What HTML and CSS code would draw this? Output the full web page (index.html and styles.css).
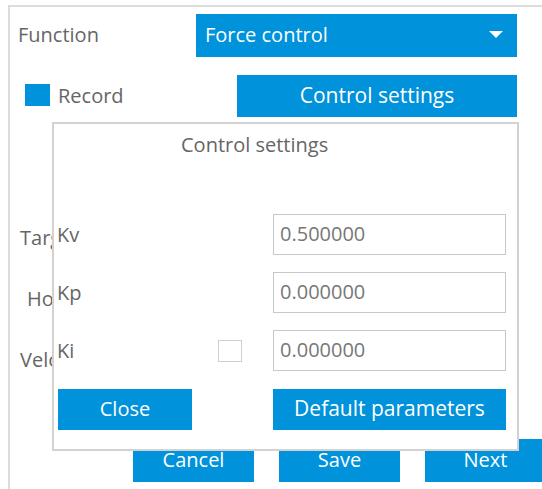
FILE: index.html
```html
<!DOCTYPE html>
<html lang="en">
<head>
<meta charset="utf-8">
<title>Function settings</title>
<link rel="stylesheet" href="styles.css">
</head>
<body>
<div class="panel">
  <div class="row row-function">
    <span class="label">Function</span>
    <div class="select">
      <span class="select-value">Force control</span>
      <svg class="caret" width="14" height="7" viewBox="0 0 14 7"><path d="M0 0H14L7 7Z" fill="#fff"/></svg>
    </div>
  </div>

  <div class="row row-record">
    <label class="check">
      <span class="box box-on"></span>
      <span class="check-text">Record</span>
    </label>
    <button class="btn btn-wide btn-settings">Control settings</button>
  </div>

  <div class="fields">
    <div class="field"><span class="field-label">Target force</span></div>
    <div class="field"><span class="field-label field-label-inset">Hold time</span></div>
    <div class="field"><span class="field-label">Velocity</span></div>
  </div>

  <div class="actions">
    <button class="btn btn-action">Cancel</button>
    <button class="btn btn-action">Save</button>
    <button class="btn btn-action">Next</button>
  </div>

  <div class="dialog">
    <div class="dialog-title">Control settings</div>
    <div class="dialog-grid">
      <span class="param-label">Kv</span>
      <span></span>
      <div class="input">0.500000</div>

      <span class="param-label">Kp</span>
      <span></span>
      <div class="input">0.000000</div>

      <span class="param-label">Ki</span>
      <span class="box box-off"></span>
      <div class="input">0.000000</div>

      <button class="btn btn-close">Close</button>
      <span></span>
      <button class="btn btn-wide btn-default">Default parameters</button>
    </div>
  </div>
</div>
</body>
</html>
```

FILE: styles.css
```css
* {
  box-sizing: border-box;
}

html, body {
  margin: 0;
  background: #fff;
  overflow: hidden;
}

body {
  font-family: "Open Sans", "Noto Sans", sans-serif;
  font-size: 20px;
  color: #666;
  height: 489px;
}

.panel {
  position: relative;
  margin: 5px 0 0 8px;
  height: 490px;
  border-top: 2px solid #dcdcdc;
  border-left: 2px solid #dcdcdc;
}

/* top rows */
.row {
  display: flex;
  align-items: center;
}

.row-function {
  margin-top: 7px;
  height: 43px;
}

.row-function .label {
  width: 186px;
  padding-left: 8px;
  margin-top: -3px;
}

.select {
  width: 321px;
  height: 43px;
  background: #0092da;
  color: #fff;
  display: flex;
  align-items: center;
  justify-content: space-between;
  padding: 0 14px 0 9px;
}

.select-value {
  margin-top: -3px;
}

.caret {
  display: block;
  margin-top: -2px;
}

.row-record {
  margin-top: 18px;
  height: 42px;
}

.check {
  width: 227px;
  display: flex;
  align-items: center;
  gap: 8px;
  padding-left: 15px;
}

.check-text {
  margin-top: -2px;
}

.box {
  display: block;
  width: 25px;
  height: 22px;
}

.box-on {
  background: #0092da;
  margin-top: -3px;
}

.box-off {
  width: 24px;
  border: 1px solid #cfcfcf;
  background: #fff;
}

.btn {
  border: none;
  margin: 0;
  padding: 0 0 3px;
  background: #0092da;
  color: #fff;
  font-family: inherit;
  font-size: 20px;
  cursor: pointer;
}

.btn-wide {
  font-size: 21px;
}

.btn-settings {
  width: 280px;
  height: 42px;
}

/* form fields, mostly covered by the dialog */
.fields {
  margin-top: 99px;
  display: flex;
  flex-direction: column;
  gap: 19px;
}

.field {
  height: 42px;
  display: flex;
  align-items: center;
  padding-left: 10px;
  white-space: nowrap;
}

.field-label-inset {
  padding-left: 7px;
}

.actions {
  margin-top: 59px;
  padding-left: 123px;
  display: flex;
  gap: 25px;
}

.btn-action {
  flex: none;
  width: 121px;
  height: 43px;
}

/* modal dialog */
.dialog {
  position: absolute;
  left: 42px;
  top: 115px;
  width: 467px;
  height: 329px;
  background: #fff;
  border: 2px solid #d2d2d2;
}

.dialog-title {
  margin-top: 9px;
  padding-left: 127px;
  line-height: 24px;
}

.dialog-grid {
  margin-top: 57px;
  padding-left: 3px;
  display: grid;
  grid-template-columns: 161px 55px 233px;
  grid-auto-rows: 41px;
  row-gap: 17px;
  align-items: center;
}

.param-label {
  line-height: 24px;
}

.input {
  height: 41px;
  border: 1px solid #c8c8c8;
  padding: 0 0 2px 6px;
  display: flex;
  align-items: center;
  color: #777;
}

.btn-close {
  width: 134px;
  height: 41px;
  margin-top: 2px;
  margin-left: 1px;
}

.btn-default {
  width: 233px;
  height: 41px;
  margin-top: 2px;
}
```
